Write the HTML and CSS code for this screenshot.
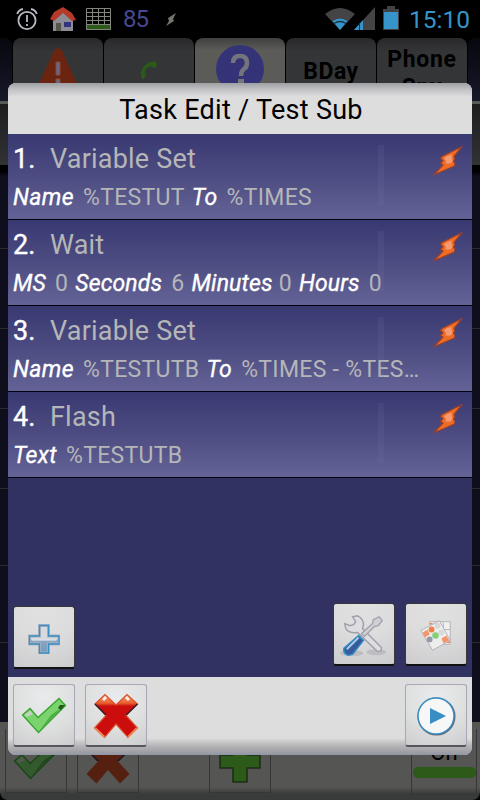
FILE: index.html
```html
<!DOCTYPE html>
<html lang="en">
<head>
<meta charset="utf-8">
<title>Task Edit</title>
<link rel="stylesheet" href="styles.css">
</head>
<body>
<svg width="0" height="0" class="defs">
  <defs>
    <linearGradient id="red" x2="0" y2="1"><stop offset="0" stop-color="#f6a27c"/><stop offset=".2" stop-color="#e9602f"/><stop offset=".27" stop-color="#cb0d0d"/><stop offset="1" stop-color="#cb0d0d"/></linearGradient>
    <symbol id="bolt" viewBox="0 0 32 32"><path d="M30 1.500 10 11.500 8.500 13.500 11 15.500 8.500 18.500 11 20 1.500 30 22.500 21 23 18.500 21.500 16 23 13.500 22 11.500Z" fill="#ef6c26" stroke="#94402f" stroke-width="1.300" stroke-linejoin="round"/><path d="M14 11.500 20 9.500 19.500 12 20.500 16 18.500 18.500 13.500 18.500 14 16 12 13.500Z" fill="#f59a70"/></symbol>
    <symbol id="check" viewBox="0 0 46 38"><path d="M1.500 18 9 11.500 17 20.500 38 1.500 44.500 8.500 17.500 35.500Z" fill="#7bd36e" stroke="#35a52f" stroke-width="1.300"/><path d="M30 18 43.500 8.500 17.500 35 Z" fill="#4fae45"/><path d="M37 11 39 8 44 8 40 13Z" fill="#22551a"/><path d="M3.500 18 9 13.500 12 17 6 20Z" fill="#c5d0c3"/></symbol>
    <symbol id="cross" viewBox="0 0 46 46"><path d="M2 11 12 1.500 23 12 34 1.500 44.500 11 33 22.500 44.500 35 35 44.500 23 31 11.500 44.500 1.500 35 13 22.500Z" fill="url(#red)" stroke="#d9502a" stroke-width="1.200"/><path d="M2 11 13 22M44.500 11 33 22" stroke="#35202a" stroke-width="1.500"/><path d="M9 6 12 3 14 5 11 8ZM32 5 34 3 37 6 35 8Z" fill="#fff0e8"/><path d="M2 35 11.500 44M44 35 35 44" stroke="#f08a58" stroke-width="2"/></symbol>
  </defs>
</svg>
<div class="screen">
  <div class="status">
    <svg class="s-alarm" viewBox="0 0 22 24" width="22" height="24" fill="none" stroke="#b9b9c4" stroke-width="1.800"><circle cx="11" cy="13.500" r="8.600"/><path d="M1.200 7Q2.500 3 7 2M20.800 7Q19.500 3 15 2M11 8v7M11 17v2"/></svg>
    <svg class="s-home" viewBox="0 0 26 24" width="26" height="24"><path d="M3 12 13 4 23 12V24H3Z" fill="#8d8d98"/><path d="M0 12 4 5 13 0 22 6 26 13 22 14 13 6 4 14Z" fill="#b53a2a"/><path d="M6 16h5v8H6Z" fill="#555548"/><path d="M14 15h7v5h-7Z" fill="#34347c"/></svg>
    <svg class="s-grid" viewBox="0 0 25 22" width="25" height="22"><path d="M0 17h25v5H0Z" fill="#2c5a18"/><path d="M.5.5h24v21H.5ZM6.500 1v16M12.500 1v16M18.500 1v16M0 4.500h25M0 8.500h25M0 12.500h25M0 16.500h25" fill="none" stroke="#85857d"/></svg>
    <span class="s-temp">85</span>
    <svg class="s-bolt" viewBox="0 0 10 14" width="10" height="14"><path d="M10 0 2 5 3 8 0 13 8 8 7 6Z" fill="#75756f"/></svg>
    <svg class="s-wifi" viewBox="0 0 30 22" width="30" height="22"><path d="M0 6Q15-6 30 6L15 22Z" fill="#444446"/><path d="M7.500 13Q15 8 22.500 13L15 22Z" fill="#3694ca"/><path d="M9 15.500Q15 11.500 21 15.500" fill="none" stroke="#17354b" stroke-width="1.300"/></svg>
    <svg class="s-signal" viewBox="0 0 21 23" width="21" height="23"><path d="M0 23 21 0V23Z" fill="#444446"/><path d="M0 23 9 13V23Z" fill="#3694ca"/><path d="M5.500 16v7" stroke="#173450"/></svg>
    <svg class="s-battery" viewBox="0 0 16 24" width="16" height="24"><path d="M0 3h4V0h8v3h4v21H0Z" fill="#424246"/><path d="M1 6h14v17H1Z" fill="#3694ca"/></svg>
    <span class="s-clock">15:10</span>
  </div>
  <div class="tabs">
    <div class="tab edge"></div>
    <div class="tab"><svg viewBox="0 0 46 46" width="46" height="46"><path d="M19 3Q23-3 27 3L45 42H1Z" fill="#6a2410"/><path d="M21 14h4v13h-4ZM21 31h4v5h-4Z" fill="#666688" stroke="#8a4838"/></svg></div>
    <div class="tab"><svg viewBox="0 0 18 20" width="18" height="20" class="phone"><path d="M8.500 1.500Q12 0 16 .5L17 4 15.500 7 11 6 10.500 4.500Q6 7 4.500 11.500L6 12 5.500 15.500 3.500 18 1.500 17Q0 12 2 8T8.500 1.500Z" fill="#2c5a18"/></svg></div>
    <div class="tab selected"><svg viewBox="0 0 48 48" width="48" height="48"><circle cx="24" cy="24" r="24" fill="#353377"/><path d="M17 18Q17 11 24 11T31 18Q31 22 28 24T25 31" fill="none" stroke="#74747c" stroke-width="4.500"/><path d="M22 34h6v5h-6Z" fill="#777"/></svg></div>
    <div class="tab"><span class="bday">BDay</span></div>
    <div class="tab"><span class="pspy">Phone<br>Spy</span></div>
    <div class="tab edge"></div>
  </div>
  <div class="panel"></div>
  <div class="lines"><i></i><i></i><i></i><i></i><i></i><i></i></div>
  <div class="bottombar">
    <div class="dimbtn"><svg class="dimcheck" width="46" height="38"><use href="#check"/></svg></div>
    <div class="dimbtn"><svg viewBox="0 0 46 46" width="46" height="46"><path d="M2 11 12 1.500 23 12 34 1.500 44.500 11 33 22.500 44.500 35 35 44.500 23 31 11.500 44.500 1.500 35 13 22.500Z" fill="#55200f"/><path d="M2 11 13 22M44.500 11 33 22" stroke="#181820" stroke-width="1.500"/></svg></div>
    <div class="dimbtn plusbtn"><svg viewBox="0 0 42 42" width="42" height="42"><path d="M14 1H28V14H41V27H28V41H14V27H1V14H14Z" fill="#2c5a18" stroke="#1c2c16" stroke-width="1.500" stroke-linejoin="round"/></svg></div>
    <div class="dimbtn onbtn"><span>On</span><b></b></div>
  </div>

  <div class="dialog">
    <div class="head"><span>Task Edit / Test Sub</span></div>
    <div class="list">
      <div class="row"><div class="main"><div class="action"><b>1.</b><span>Variable Set</span></div><div class="args"><em>Name</em><span>%TESTUT</span><em>To</em><span>%TIMES</span></div></div><i class="grip"></i><svg class="bolt" width="32" height="32"><use href="#bolt"/></svg></div>
      <div class="row"><div class="main"><div class="action"><b>2.</b><span>Wait</span></div><div class="args times"><em>MS</em><span>0</span><em>Seconds</em><span>6</span><em class="tight">Minutes</em><span>0</span><em>Hours</em><span>0</span></div></div><i class="grip"></i><svg class="bolt" width="32" height="32"><use href="#bolt"/></svg></div>
      <div class="row"><div class="main"><div class="action"><b>3.</b><span>Variable Set</span></div><div class="args"><em>Name</em><span>%TESTUTB</span><em>To</em><span>%TIMES - %TES…</span></div></div><i class="grip"></i><svg class="bolt" width="32" height="32"><use href="#bolt"/></svg></div>
      <div class="row"><div class="main"><div class="action"><b>4.</b><span>Flash</span></div><div class="args"><em>Text</em><span>%TESTUTB</span></div></div><i class="grip"></i><svg class="bolt" width="32" height="32"><use href="#bolt"/></svg></div>
      <div class="tools">
        <div class="tool add"><svg viewBox="0 0 32 30" width="32" height="30"><defs><linearGradient id="pg" x2="0" y2="1"><stop offset=".5" stop-color="#d7d9dd"/><stop offset=".55" stop-color="#8fa5bd"/><stop offset="1" stop-color="#6e9cc4"/></linearGradient></defs><path d="M11.500 1.500h9v10.500H31v8H20.500v9h-9v-9H1.500v-8h10Z" fill="url(#pg)" stroke="#adb3bf" stroke-width="3"/><path d="M11.500 1.500h9v10.500H31v8H20.500v9h-9v-9H1.500v-8h10Z" fill="none" stroke="#3a8fc4" stroke-width="1.300"/><path d="M4 16h24" stroke="#e8edf3"/></svg></div>
        <div class="tool"><svg viewBox="0 0 61 61" width="60" height="60"><ellipse cx="18" cy="50" rx="12" ry="3" fill="#bdbdc1"/><ellipse cx="43" cy="49" rx="10" ry="3" fill="#bdbdc1"/><path d="M19 13 24 12Q30 15 30 21L29 25 48 44Q49 49 44 48L24 29Q15 30 12 25L11 20 16 22 20 21 22 18Z" fill="#dedee0" stroke="#9fa0ab" stroke-width="1.500"/><path d="M28 30 39 20 40 16 46 13 49 17 45 22 41 23 31 33Z" fill="#cfcfd4" stroke="#9fa0ab" stroke-width="1.300"/><path d="M25 32 30 37 19 51Q12 54 10 48V45Z" fill="#355da0" stroke="#338bc1" stroke-width="1.500"/><path d="M25 34 13 46" stroke="#aacbea" stroke-width="2"/><path d="M27 37 16 50" stroke="#493b8a" stroke-dasharray="1 1"/></svg></div>
        <div class="tool"><svg viewBox="0 0 61 61" width="60" height="60"><path d="M24 18h21v23H29Z" fill="#f0f0f0" stroke="#b5b5b8"/><path d="M38 19v20M28 26h17M40 39h5" stroke="#b5b5b8"/><path d="M24 20h3M41 39h4" stroke="#ee8557" stroke-width="1.500"/><path d="M15 27 34 17 45 37 27 47Z" fill="#ededee" stroke="#b3b3b8"/><path d="M17 29 22 26 24 31 19 34ZM36 35 41 32 44 37 38 40Z" fill="#f3976b"/><circle cx="26" cy="26" r="3" fill="#ef8048"/><circle cx="24" cy="36" r="3" fill="#969aa5"/><circle cx="30" cy="32" r="3.300" fill="#83d079"/><circle cx="32" cy="22" r="3" fill="#d7d7da"/><circle cx="36" cy="29" r="3" fill="#dadadb"/></svg></div>
      </div>
    </div>
    <div class="foot">
      <div class="btn"><svg width="46" height="38"><use href="#check"/></svg></div>
      <div class="btn"><svg width="46" height="46"><use href="#cross"/></svg></div>
      <div class="btn play"><svg viewBox="0 0 40 40" width="40" height="40"><circle cx="20.500" cy="20.500" r="18" fill="#fafafa" stroke="#62626d" stroke-width="2"/><circle cx="20" cy="20" r="18" fill="#f7f7f8" stroke="#3b8fc3" stroke-width="1.500"/><path d="M14 12 30 20 14 28Z" fill="#368ec3"/></svg></div>
    </div>
  </div>
</div>
</body>
</html>
```
FILE: styles.css
```css
* { box-sizing: border-box; }
html, body { margin: 0; background: #000; }
body { font-family: Roboto, "Liberation Sans", sans-serif; overflow: hidden; }
.defs { position: absolute; }
svg { display: block; flex: none; }
.screen { position: relative; width: 480px; height: 800px; overflow: hidden; background: #000; display: flex; flex-direction: column; }

.status { height: 38px; flex: none; display: flex; align-items: flex-start; padding-left: 16px; white-space: nowrap; }
.s-alarm { margin-top: 7px; }
.s-home { margin: 7px 0 0 12px; }
.s-grid { margin: 8px 0 0 10px; }
.s-temp { width: 30px; margin-left: 12px; color: #464890; font-size: 24px; line-height: 39px; letter-spacing: -1px; }
.s-bolt { margin: 13px 0 0 13px; }
.s-wifi { margin: 8px 0 0 149px; }
.s-signal { margin: 7px 0 0 -1px; }
.s-battery { margin: 6px 0 0 8px; }
.s-clock { margin-left: 10px; color: #3694ca; font-size: 24.500px; line-height: 39px; }

.tabs { height: 63px; flex: none; display: flex; gap: 1px; margin-left: -78px; width: 640px; }
.tab { width: 90px; height: 63px; flex: none; border-radius: 8px 8px 0 0; background: linear-gradient(#29292b, #343537 14px, #343537); display: flex; justify-content: center; padding-top: 10px; color: #000; overflow: hidden; }
.tab.selected { background: linear-gradient(#40403f, #5b5b58 12px, #5b5b58); padding-top: 7px; }
.tab.edge { background: linear-gradient(#08080f, #17172b); }
.tab .phone { margin-top: 13px; }
.bday { font-weight: 700; font-size: 23px; line-height: 26px; margin-top: 11px; letter-spacing: .5px; }
.pspy { font-weight: 700; font-size: 23px; line-height: 28px; margin-top: -2px; text-align: center; letter-spacing: .7px; }

.panel { height: 64px; flex: none; border-top: 3px solid #595957; background: linear-gradient(#1e1e1f, #313234); }
.lines { flex: 1; background: linear-gradient(#000 0, #000 6px, #0f0e1c 12px); padding-top: 4px; display: grid; grid-template-rows: 80px 80px 80px 80px 77px 77px; }
.lines i { border-bottom: 1px solid #2b2b2b; }
.bottombar { height: 78px; flex: none; background: linear-gradient(#555553 0, #555553 65px, #393a3a 72px, #393a3a); border-radius: 0 0 8px 8px; display: flex; padding: 7px 3px 0 5px; }
.dimbtn { width: 62px; height: 64px; border: 1px solid #363636; border-top: 0; display: flex; align-items: center; justify-content: center; margin-right: 10px; padding-top: 2px; }
.dimcheck { filter: brightness(.42); }
.plusbtn { margin-left: 60px; margin-right: 0; }
.onbtn { width: 66px; height: 66px; margin: 0 0 0 auto; flex-direction: column; justify-content: flex-start; padding-top: 10px; font-size: 22px; line-height: 28px; font-weight: 400; color: #000; }
.onbtn b { width: 63px; height: 11px; border-radius: 5px; background: #2d5a19; flex: none; }

.dialog { position: absolute; left: 8px; top: 83px; width: 464px; height: 672px; border-radius: 8px; overflow: hidden; display: flex; flex-direction: column; background: #ddd; }
.head { height: 51px; flex: none; background: linear-gradient(#9fa0a4, #c4c4c7 7px, #ddd 14px); color: #000; font-size: 27px; line-height: 54px; text-align: center; padding-left: 2px; letter-spacing: .28px; }
.list { height: 543px; flex: none; background: #323262; display: flex; flex-direction: column; }
.row { height: 86px; flex: none; border-bottom: 1px solid #000010; background: linear-gradient(#393972, #4b4a80 45%, #646396); display: flex; padding: 0 8px 0 5px; white-space: nowrap; }
.main { width: 365px; flex: none; }
.action { height: 50px; line-height: 50px; font-size: 27px; display: flex; letter-spacing: .2px; }
.action b { width: 37px; font-weight: 400; color: #fff; -webkit-text-stroke: .4px #fff; letter-spacing: 0; }
.action span, .args span { color: #b5b6b8; }
.args { font-size: 23px; line-height: 27px; display: flex; }
.args em { font-weight: 400; color: #fff; -webkit-text-stroke: .35px #fff; margin-right: 9px; letter-spacing: .4px; }
.args span { margin-right: 7px; letter-spacing: .3px; }
.times em { letter-spacing: .15px; }
.times em.tight { margin-right: 6px; }
.grip { width: 6px; height: 60px; margin: 11px auto 0 0; background: rgba(120, 120, 175, .13); }
.bolt { margin-top: 11px; }
.tools { flex: 1; display: flex; align-items: flex-end; padding: 0 5px 11px; gap: 10px; }
.tool { width: 62px; height: 63px; border: 1px solid #38383c; border-bottom: 2px solid #111; border-radius: 3px; background: radial-gradient(circle at 50% 0, #e1e1e1, #dcdcdd 50%, #ccccce); display: flex; align-items: center; justify-content: center; flex: none; }
.tool.add { margin: 0 auto -3px 0; padding-top: 4px; }
.foot { flex: 1; display: flex; gap: 10px; padding: 7px 5px 0; background: linear-gradient(#ddd 0, #ddd 61px, #b4b4b6 69px, #a3a4a8 74px, #9195a4 78px); }
.btn { width: 62px; height: 63px; flex: none; border: 1px solid #a7a7b8; border-bottom: 2px solid #56565c; border-radius: 3px; background: radial-gradient(circle at 50% 20%, #e9eaeb, #dedfdf 55%, #cdcdcf); display: flex; align-items: center; justify-content: center; padding-top: 2px; }
.btn.play { margin-left: auto; }
```
